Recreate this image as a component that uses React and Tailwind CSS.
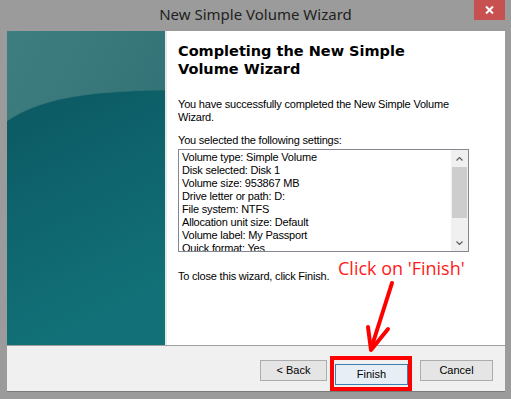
const settings = [
  "Volume type: Simple Volume",
  "Disk selected: Disk 1",
  "Volume size: 953867 MB",
  "Drive letter or path: D:",
  "File system: NTFS",
  "Allocation unit size: Default",
  "Volume label: My Passport",
  "Quick format: Yes",
];

const WinButton = ({ children, primary, className = "" }) => (
  <button
    className={`h-[21px] text-[11px] text-black border ${
      primary ? "border-[#3c7fb1] bg-[#e8eef5]" : "border-[#acacac] bg-[#e5e5e5]"
    } ${className}`}
  >
    {children}
  </button>
);

const SidePanel = () => (
  <svg width="158" height="314" viewBox="0 0 158 314" className="block">
    <defs>
      <linearGradient id="top" x1="0" y1="0" x2="1" y2="1">
        <stop offset="0" stopColor="#3f7e80" />
        <stop offset="1" stopColor="#2c6b70" />
      </linearGradient>
      <linearGradient id="bottom" x1="0" y1="0" x2="0.3" y2="1">
        <stop offset="0" stopColor="#0b5862" />
        <stop offset="1" stopColor="#127178" />
      </linearGradient>
    </defs>
    <rect width="158" height="314" fill="url(#top)" />
    <path d="M0 90 C 30 70, 70 60, 158 59 L158 314 L0 314 Z" fill="url(#bottom)" />
    <path d="M0 90 C 30 70, 70 60, 158 59" fill="none" stroke="#3a7779" strokeWidth="1" opacity="0.6" />
  </svg>
);

export default function App() {
  return (
    <div
      className="relative w-[511px] h-[399px] bg-[#9b9b9b] flex flex-col overflow-hidden"
      style={{ fontFamily: "'Liberation Sans', Arial, sans-serif" }}
    >
      {/* title bar */}
      <div className="relative h-[31px] flex items-center justify-center">
        <span
          className="text-[15px] text-[#222] -mt-[3px]"
          style={{ fontFamily: "'Noto Sans', 'Open Sans', sans-serif" }}
        >
          New Simple Volume Wizard
        </span>
        <div className="absolute right-[6px] top-0 w-[31px] h-[20px] bg-[#c75050] flex items-center justify-center">
          <svg width="9" height="8" viewBox="0 0 9 8">
            <path d="M1 0.5 L8 7.5 M8 0.5 L1 7.5" stroke="#fff" strokeWidth="2" />
          </svg>
        </div>
      </div>

      {/* window body */}
      <div className="ml-[7px] mr-[6px] flex flex-col border-b border-[#7a7a7a]">
        <div className="flex h-[314px]">
          <SidePanel />
          <div className="flex-1 bg-white border-l-2 border-[#e8e8e8] pl-[11px] pr-[36px] pt-[11px] text-[11px] text-black leading-[13px] tracking-[-0.2px]">
            <h1
              className="text-[14.5px] font-bold leading-[18px] tracking-normal"
              style={{ fontFamily: "'DejaVu Sans', Verdana, sans-serif" }}
            >
              Completing the New Simple
              <br />
              Volume Wizard
            </h1>
            <p className="mt-[20px]">
              You have successfully completed the New Simple Volume
              <br />
              Wizard.
            </p>
            <p className="mt-[10px]">You selected the following settings:</p>
            <div className="mt-[2px] h-[103px] border border-[#828790] flex">
              <div className="flex-1 overflow-hidden pl-[3px] pt-[1px]">
                {settings.map((s) => (
                  <div key={s} className="whitespace-nowrap">
                    {s}
                  </div>
                ))}
              </div>
              <div className="w-[17px] bg-[#f0f0f0] flex flex-col items-center">
                <div className="h-[17px] flex items-center justify-center">
                  <svg width="7" height="4" viewBox="0 0 7 4">
                    <path d="M0.5 3.5 L3.5 0.5 L6.5 3.5" fill="none" stroke="#606060" strokeWidth="1.2" />
                  </svg>
                </div>
                <div className="w-[15px] h-[51px] bg-[#cdcdcd]" />
                <div className="flex-1" />
                <div className="h-[17px] flex items-center justify-center">
                  <svg width="7" height="4" viewBox="0 0 7 4">
                    <path d="M0.5 0.5 L3.5 3.5 L6.5 0.5" fill="none" stroke="#606060" strokeWidth="1.2" />
                  </svg>
                </div>
              </div>
            </div>
            <p className="mt-[18px] w-fit">To close this wizard, click Finish.</p>
          </div>
        </div>
        <div className="h-px bg-[#a0a0a0]" />
        <div className="h-[45px] bg-[#f0f0f0] flex justify-end items-start pt-[10px] pr-[12px]">
          <WinButton className="w-[67px] mt-[4px]">&lt; Back</WinButton>
          <div className="ml-[3px] border-4 border-[#ff0000] pl-px pr-0 pt-px pb-[2px]">
            <WinButton primary className="w-[73px]">
              Finish
            </WinButton>
          </div>
          <WinButton className="w-[73px] ml-[8px] mt-[4px]">Cancel</WinButton>
        </div>
      </div>

      {/* annotation */}
      <div
        className="absolute left-[338px] top-[258px] text-[18px] leading-[20px] text-[#ff1a1a]"
        style={{ fontFamily: "'Open Sans', 'Noto Sans', sans-serif" }}
      >
        Click on 'Finish'
      </div>
      <svg className="absolute left-0 top-0" width="511" height="399" viewBox="0 0 511 399">
        <path d="M392 283 L371 349" stroke="#ff0000" strokeWidth="4" strokeLinecap="round" />
        <path d="M368 327 L371 350 L388 329" fill="none" stroke="#ff0000" strokeWidth="4" strokeLinecap="round" strokeLinejoin="round" />
      </svg>
    </div>
  );
}
